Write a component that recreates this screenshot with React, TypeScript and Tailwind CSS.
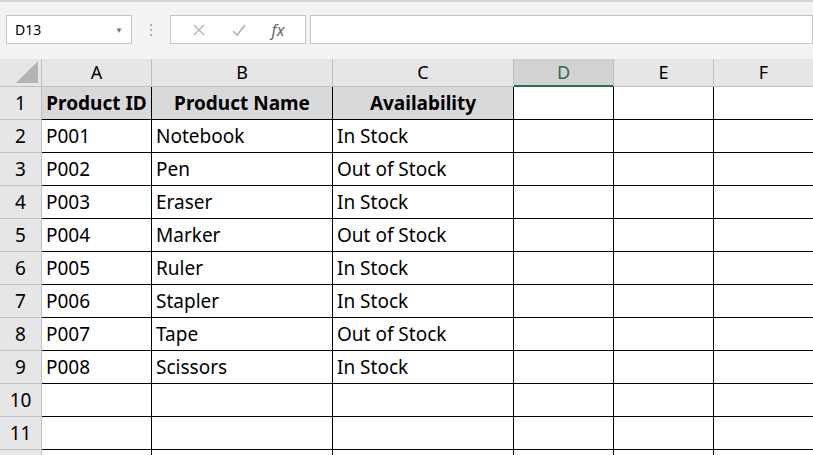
const cols = [
  { k: "A", w: "w-[110px]" },
  { k: "B", w: "w-[181px]" },
  { k: "C", w: "w-[181px]" },
  { k: "D", w: "w-[100px]" },
  { k: "E", w: "w-[100px]" },
  { k: "F", w: "w-[100px]" },
];

const rows: string[][] = [
  ["Product ID", "Product Name", "Availability"],
  ["P001", "Notebook", "In Stock"],
  ["P002", "Pen", "Out of Stock"],
  ["P003", "Eraser", "In Stock"],
  ["P004", "Marker", "Out of Stock"],
  ["P005", "Ruler", "In Stock"],
  ["P006", "Stapler", "In Stock"],
  ["P007", "Tape", "Out of Stock"],
  ["P008", "Scissors", "In Stock"],
  [],
  [],
  [],
];

export default function App() {
  return (
    <div className="w-[813px] h-[455px] overflow-hidden bg-white font-['Noto_Sans',sans-serif] text-black">
      <div className="h-[59px] bg-[#f3f3f3] border-t-2 border-[#d6d6d6] flex items-start pt-[13px] pl-[6px]">
        <div className="w-[126px] h-[29px] bg-white border border-[#c6c6c6] flex items-center justify-between px-2 text-[14px]">
          <span>D13</span>
          <span className="text-[8px] text-[#777]">▼</span>
        </div>
        <div className="w-[38px] h-[29px] flex items-center justify-center">
          <svg width="4" height="14" viewBox="0 0 4 14">
            <rect x="1" y="1" width="2" height="2" fill="#b0b0b0" />
            <rect x="1" y="6" width="2" height="2" fill="#b0b0b0" />
            <rect x="1" y="11" width="2" height="2" fill="#b0b0b0" />
          </svg>
        </div>
        <div className="w-[136px] h-[29px] bg-white border border-[#c6c6c6] flex items-center justify-around px-2">
          <svg width="14" height="14" viewBox="0 0 14 14"><path d="M2 2L12 12M12 2L2 12" stroke="#b0b0b0" strokeWidth="1.3" /></svg>
          <svg width="16" height="14" viewBox="0 0 16 14"><path d="M2 8L6 12L14 2" stroke="#b0b0b0" strokeWidth="1.6" fill="none" /></svg>
          <span className="font-['Liberation_Serif',serif] italic text-[16px] text-[#666]">fx</span>
        </div>
        <div className="ml-[4px] flex-1 h-[29px] bg-white border border-[#c6c6c6]" />
      </div>
      <div className="flex h-[28px] bg-[#e6e6e6]">
        <div className="w-[42px] shrink-0 border-r border-[#bfbfbf] border-b border-b-[#bfbfbf] relative">
          <svg className="absolute right-[3px] bottom-[3px]" width="22" height="22" viewBox="0 0 22 22"><path d="M22 0L22 22L0 22Z" fill="#b4b4b4" /></svg>
        </div>
        {cols.map((c) => (
          <div
            key={c.k}
            className={`${c.w} shrink-0 flex items-center justify-center text-[18px] border-r border-[#bfbfbf] ${
              c.k === "D" ? "bg-[#d2d2d2] text-[#217346] border-b-2 border-b-[#217346]" : "border-b border-b-[#bfbfbf]"
            }`}
          >
            {c.k}
          </div>
        ))}
      </div>
      {rows.map((r, i) => (
        <div key={i} className="flex h-[33px]">
          <div className="w-[42px] shrink-0 bg-[#e6e6e6] border-r border-[#bfbfbf] border-b border-b-[#bfbfbf] flex items-center justify-center text-[19px]">
            {i + 1}
          </div>
          {cols.map((c, j) => (
            <div
              key={c.k}
              className={`${c.w} shrink-0 border-r border-b border-black flex items-center px-[4px] text-[19px] whitespace-nowrap overflow-hidden ${
                i === 0 && j < 3 ? "bg-[#d9d9d9] font-bold justify-center" : ""
              }`}
            >
              {r[j] ?? ""}
            </div>
          ))}
        </div>
      ))}
    </div>
  );
}
